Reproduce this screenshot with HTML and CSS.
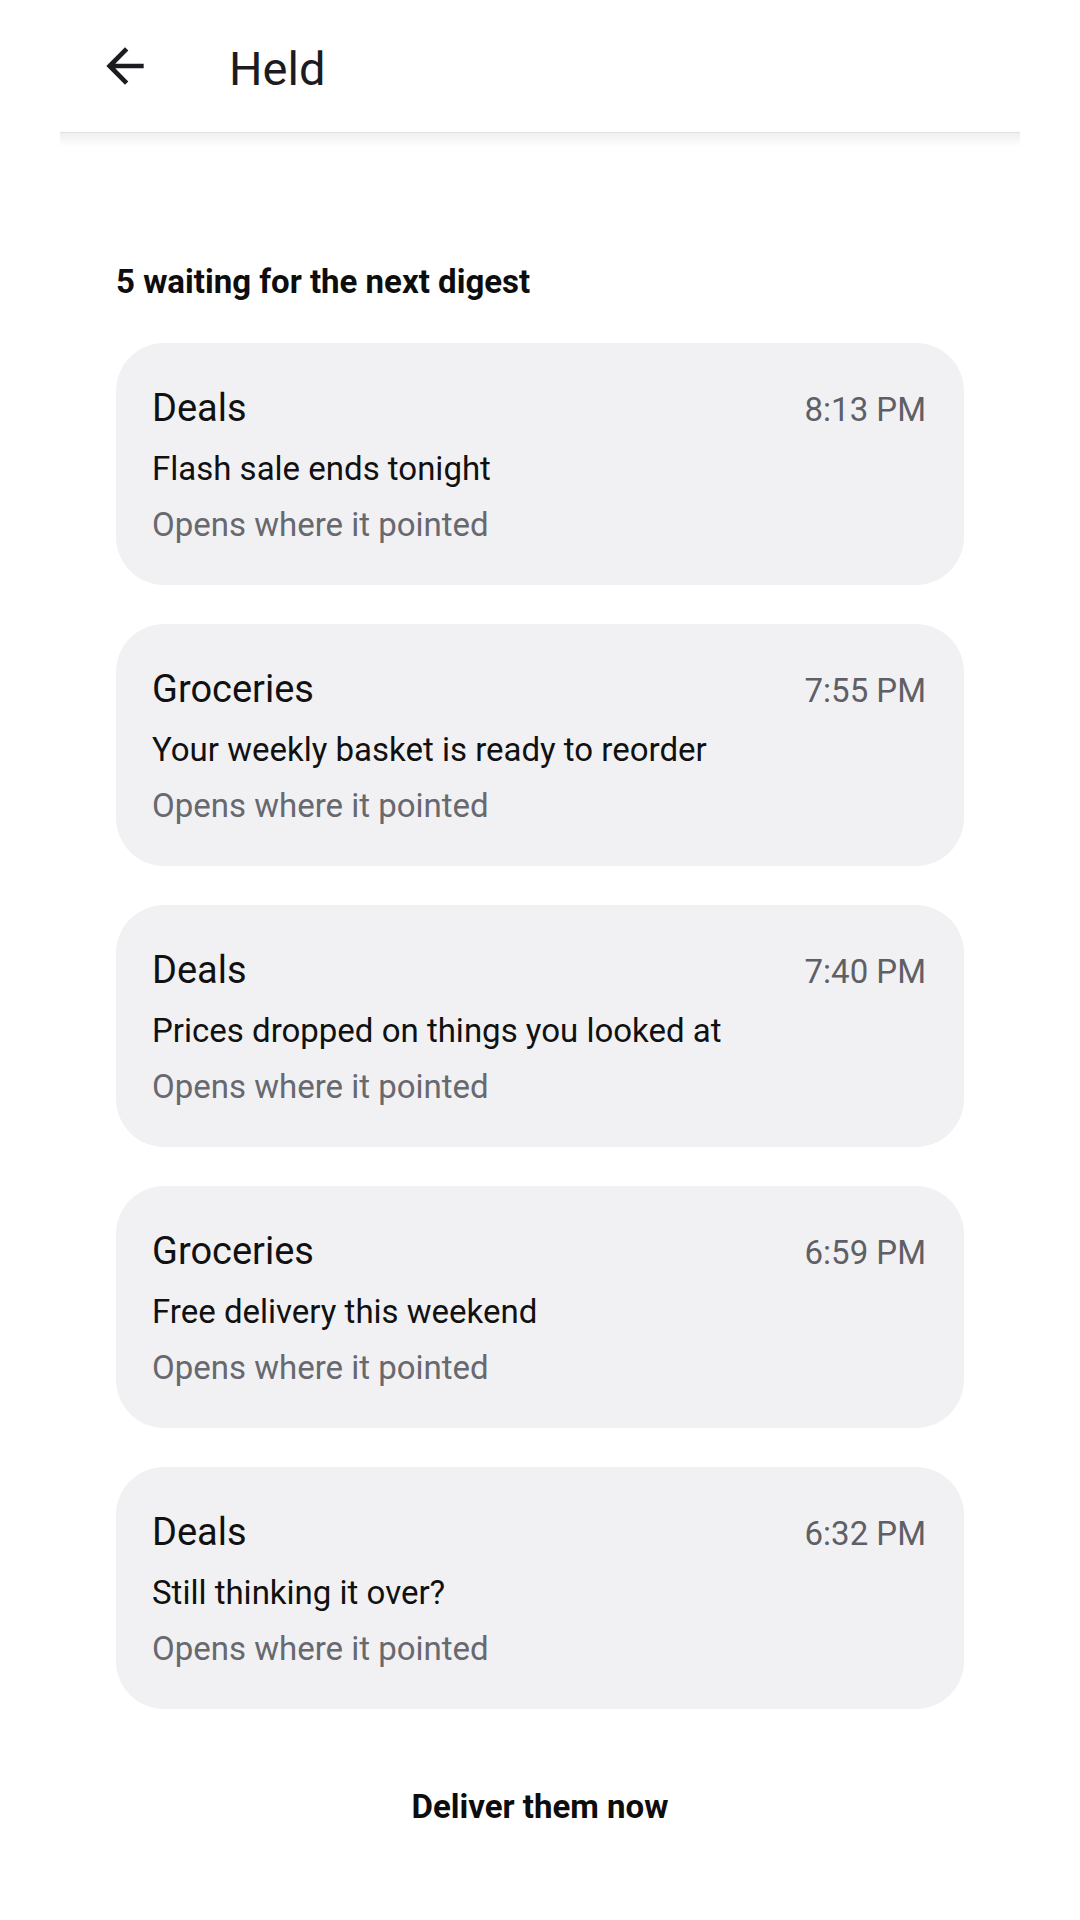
FILE: index.html
```html
<!DOCTYPE html>
<html lang="en">
<head>
<meta charset="utf-8">
<title>Held</title>
<link rel="stylesheet" href="styles.css">
</head>
<body>
<header class="topbar">
  <button class="back" aria-label="Back">
    <svg viewBox="0 0 24 24" width="56" height="56"><path d="M20 11H7.83l5.59-5.59L12 4l-8 8 8 8 1.41-1.41L7.83 13H20v-2z" fill="#1c1b1f"/></svg>
  </button>
  <h1 class="title">Held</h1>
</header>
<div class="topbar-shade"></div>
<main class="content">
  <h2 class="section-title">5 waiting for the next digest</h2>
  <ul class="cards">
    <li class="card">
      <div class="card-head"><span class="card-app">Deals</span><span class="card-time">8:13 PM</span></div>
      <div class="card-subject">Flash sale ends tonight</div>
      <div class="card-hint">Opens where it pointed</div>
    </li>
    <li class="card">
      <div class="card-head"><span class="card-app">Groceries</span><span class="card-time">7:55 PM</span></div>
      <div class="card-subject">Your weekly basket is ready to reorder</div>
      <div class="card-hint">Opens where it pointed</div>
    </li>
    <li class="card">
      <div class="card-head"><span class="card-app">Deals</span><span class="card-time">7:40 PM</span></div>
      <div class="card-subject">Prices dropped on things you looked at</div>
      <div class="card-hint">Opens where it pointed</div>
    </li>
    <li class="card">
      <div class="card-head"><span class="card-app">Groceries</span><span class="card-time">6:59 PM</span></div>
      <div class="card-subject">Free delivery this weekend</div>
      <div class="card-hint">Opens where it pointed</div>
    </li>
    <li class="card">
      <div class="card-head"><span class="card-app">Deals</span><span class="card-time">6:32 PM</span></div>
      <div class="card-subject">Still thinking it over?</div>
      <div class="card-hint">Opens where it pointed</div>
    </li>
  </ul>
  <div class="actions">
    <button class="deliver">Deliver them now</button>
  </div>
</main>
</body>
</html>
```

FILE: styles.css
```css
* { box-sizing: border-box; }

html, body {
  margin: 0;
  padding: 0;
  background: #ffffff;
  font-family: Roboto, "Noto Sans", "Liberation Sans", sans-serif;
  color: #111111;
}

.topbar {
  margin: 0 60px;
  height: 133px;
  display: flex;
  align-items: center;
  border-bottom: 1px solid #e2e2e4;
}

.back {
  margin-left: 37px;
  width: 56px;
  height: 56px;
  padding: 0;
  border: 0;
  background: none;
  display: flex;
  align-items: center;
  justify-content: center;
}

.back svg { display: block; }

.title {
  margin: 0 0 0 76px;
  padding-top: 6px;
  font-size: 47px;
  line-height: 56px;
  font-weight: 400;
  color: #1c1b1f;
}

.topbar-shade {
  margin: 0 60px;
  height: 14px;
  background: linear-gradient(to bottom, #efeff0, rgba(255, 255, 255, 0));
}

.content {
  padding: 0 116px;
}

.section-title {
  margin: 115px 0 0;
  font-size: 33px;
  line-height: 40px;
  font-weight: 700;
  color: #0d0d0d;
}

.cards {
  list-style: none;
  margin: 41px 0 0;
  padding: 0;
  display: flex;
  flex-direction: column;
  gap: 39px;
}

.card {
  background: #f1f1f4;
  border-radius: 48px;
  padding: 43px 38px 42px 36px;
  height: 242px;
}

.card-head {
  display: flex;
  justify-content: space-between;
  align-items: baseline;
  line-height: 44px;
}

.card-app {
  font-size: 38px;
  color: #111111;
}

.card-time {
  font-size: 33px;
  color: #5f5f66;
}

.card-subject {
  margin-top: 17px;
  font-size: 33px;
  line-height: 40px;
  color: #111111;
}

.card-hint {
  margin-top: 16px;
  font-size: 33px;
  line-height: 40px;
  color: #68686f;
}

.actions {
  margin-top: 78px;
  display: flex;
  justify-content: center;
}

.deliver {
  border: 0;
  background: none;
  padding: 0;
  font-family: inherit;
  font-size: 33px;
  line-height: 40px;
  font-weight: 700;
  color: #0d0d0d;
}
```
